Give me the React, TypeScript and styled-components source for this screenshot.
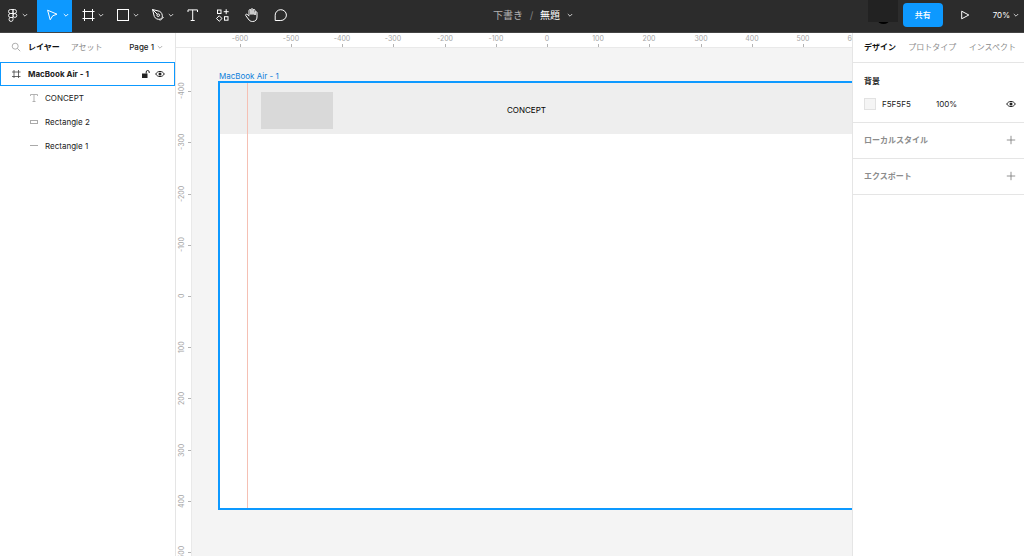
import React from "react";
import styled, { createGlobalStyle, css } from "styled-components";

const BLUE = "#0d99ff";
const SCALE = 0.512;
const RULER = 15;

const GlobalStyle = createGlobalStyle`
  *, *::before, *::after { box-sizing: border-box; }
  body {
    margin: 0;
    font: 400 8px/12px Inter, "Noto Sans CJK JP", sans-serif;
    color: #222;
    background: #fff;
  }
  h1, h2, ul, p { margin: 0; padding: 0; font: inherit; list-style: none; }
  button, input {
    margin: 0;
    padding: 0;
    border: 0;
    background: none;
    font: inherit;
    color: inherit;
  }
  svg { display: block; flex: none; }
`;

const Shell = styled.div`
  display: flex;
  flex-direction: column;
  height: 100vh;
  overflow: hidden;
`;

/* ---------- toolbar ---------- */

const Toolbar = styled.header`
  flex: none;
  display: grid;
  grid-template-columns: 1fr auto 1fr;
  height: 33px;
  background: #2c2c2c;
  border-bottom: 1px solid #444;
  color: #fff;
`;

const Tools = styled.nav`
  display: flex;
`;

const MenuTool = styled.button<{ $active?: boolean; $main?: boolean }>`
  display: flex;
  align-items: center;
  gap: 2px;
  width: ${(p) => (p.$main ? 37 : 35)}px;
  height: 32px;
  padding: 0 0 2px ${(p) => (p.$main ? 4 : 8)}px;
  ${(p) =>
    p.$active &&
    css`
      background: ${BLUE};
    `}
`;

const SingleTools = styled.div`
  display: flex;
  padding-left: 1px;
`;

const Tool = styled.button`
  display: flex;
  align-items: center;
  justify-content: center;
  width: 29px;
  height: 32px;
  padding-bottom: 2px;
`;

const FileTitle = styled.div`
  display: flex;
  align-items: center;
  padding: 0 0 2px 42px;
  font-size: 10px;
  line-height: 16px;
`;

const Folder = styled.a`
  color: #b3b3b3;
  text-decoration: none;
`;

const Slash = styled.span`
  width: 17px;
  text-align: center;
  color: #808080;
`;

const FileName = styled.button`
  display: flex;
  align-items: center;
  gap: 7px;
`;

const Actions = styled.div`
  display: flex;
  justify-content: flex-end;
  align-items: flex-start;
`;

const Avatar = styled.div`
  width: 30px;
  height: 24px;
  margin-right: 5px;
`;

const Share = styled.button`
  width: 40px;
  height: 24px;
  margin-top: 3px;
  border-radius: 4px;
  background: ${BLUE};
  font-weight: 500;
`;

const Play = styled(Tool)`
  width: 44px;
`;

const Zoom = styled.button`
  display: flex;
  align-items: center;
  gap: 3px;
  height: 32px;
  padding: 0 5px 2px 6px;
`;

/* ---------- panels ---------- */

const Body = styled.div`
  flex: 1;
  display: flex;
  min-height: 0;
`;

const LeftPanel = styled.aside`
  flex: none;
  width: 176px;
  border-right: 1px solid #e5e5e5;
`;

const RightPanel = styled.aside`
  flex: none;
  width: 172px;
  border-left: 1px solid #e5e5e5;
  background: #fff;
`;

const LayerTabs = styled.div`
  display: flex;
  align-items: center;
  height: 29px;
  padding: 0 12px 2px 11px;
`;

const Tab = styled.button<{ $active?: boolean }>`
  font-weight: ${(p) => (p.$active ? 700 : 400)};
  color: ${(p) => (p.$active ? "#111" : "#8c8c8c")};
  white-space: nowrap;
`;

const SearchButton = styled.button`
  margin-right: 7px;
`;

const AssetsTab = styled(Tab)`
  margin-left: 11px;
`;

const PageMenu = styled.button`
  display: flex;
  align-items: center;
  gap: 3px;
  margin-left: auto;
  font-weight: 500;
`;

const FrameRow = styled.div`
  display: flex;
  align-items: center;
  height: 24px;
  padding: 0 9px 0 10px;
  border: 1px solid ${BLUE};
  font-weight: 700;
`;

const FrameName = styled.span`
  flex: 1;
  padding-left: 7px;
`;

const RowButton = styled.button`
  margin-left: 4px;
`;

const Layers = styled.ul`
  display: flex;
  flex-direction: column;
  padding-top: 1px;
`;

const Layer = styled.li`
  display: flex;
  align-items: center;
  gap: 5px;
  height: 23px;
  margin-bottom: 1px;
  padding: 0 0 2px 28px;
`;

const DesignTabs = styled.div`
  display: flex;
  align-items: center;
  justify-content: space-between;
  height: 30px;
  padding: 0 8px 2px 11px;
  border-bottom: 1px solid #e5e5e5;
`;

const Background = styled.section`
  height: 60px;
  padding: 12px 8px 0 11px;
  border-bottom: 1px solid #e5e5e5;
`;

const SectionTitle = styled.h2<{ $muted?: boolean }>`
  font-weight: 700;
  color: ${(p) => (p.$muted ? "#8c8c8c" : "#222")};
`;

const Fill = styled.div`
  display: flex;
  align-items: center;
  margin-top: 11px;
`;

const Swatch = styled.button`
  width: 12px;
  height: 12px;
  margin-right: 6px;
  border: 1px solid #e2e2e2;
  background: #f5f5f5;
`;

const Field = styled.input`
  width: 54px;
  height: 12px;
  outline: none;
`;

const FillVisibility = styled.button`
  margin-left: auto;
`;

const Collapsed = styled.section`
  display: flex;
  align-items: center;
  justify-content: space-between;
  height: 36px;
  padding: 0 8px 1px 11px;
  border-bottom: 1px solid #e5e5e5;
`;

/* ---------- canvas ---------- */

const Viewport = styled.main`
  flex: 1;
  min-width: 0;
  display: grid;
  grid-template: ${RULER}px 1fr / 16px 1fr;
  overflow: hidden;
`;

const Corner = styled.div`
  border-bottom: 1px solid #e9e9e9;
`;

const TopRuler = styled.div`
  position: relative;
  overflow: hidden;
  border-bottom: 1px solid #e9e9e9;
  font-size: 7px;
  line-height: 12px;
  color: #a6a6a6;
`;

const TopMark = styled.span`
  position: absolute;
  top: 0;
  width: 30px;
  height: 100%;
  margin-left: -15px;
  text-align: center;
  &::after {
    content: "";
    position: absolute;
    left: 15px;
    bottom: 0;
    width: 1px;
    height: 3px;
    background: #b3b3b3;
  }
`;

const SideRuler = styled.div`
  position: relative;
  overflow: hidden;
  border-right: 1px solid #e9e9e9;
  font-size: 7px;
  line-height: 10px;
  color: #a6a6a6;
`;

const SideMark = styled.span`
  position: absolute;
  left: 0;
  width: 100%;
  height: 30px;
  margin-top: -15px;
  display: flex;
  justify-content: center;
  padding-right: 3px;
  &::after {
    content: "";
    position: absolute;
    right: 0;
    top: 15px;
    width: 3px;
    height: 1px;
    background: #b3b3b3;
  }
`;

const SideText = styled.span`
  writing-mode: vertical-rl;
  transform: rotate(180deg);
  text-align: center;
`;

const Canvas = styled.div`
  position: relative;
  overflow: hidden;
  background: #f4f4f4;
`;

const Artboard = styled.div`
  position: absolute;
  left: 26px;
  top: 33px;
  width: 658px;
  height: 429px;
  border: 2px solid ${BLUE};
  background: #fff;
`;

const ArtboardName = styled.span`
  position: absolute;
  left: 27px;
  top: 22px;
  color: #0d7fdb;
`;

const Bar = styled.div`
  position: absolute;
  left: 0;
  top: 0;
  width: 100%;
  height: 51px;
  background: #eee;
`;

const Logo = styled.div`
  position: absolute;
  left: 41px;
  top: 9px;
  width: 72px;
  height: 37px;
  background: #d9d9d9;
`;

const Heading = styled.h1`
  position: absolute;
  left: 287px;
  top: 21px;
  color: #000;
`;

const Guide = styled.div`
  position: absolute;
  left: 27px;
  top: 0;
  width: 1px;
  height: 100%;
  background: #f5c0b4;
`;

/* ---------- icons ---------- */

const Icon = ({
  size = 16,
  color = "#fff",
  children,
}: {
  size?: number;
  color?: string;
  children: React.ReactNode;
}) => (
  <svg
    width={size}
    height={size}
    viewBox={`0 0 ${size} ${size}`}
    fill="none"
    stroke={color}
    strokeWidth="1"
    aria-hidden="true"
  >
    {children}
  </svg>
);

const Chevron = ({ color = "#ddd" }: { color?: string }) => (
  <Icon size={6} color={color}>
    <path d="M.8 2 3 4.2 5.2 2" strokeWidth=".9" />
  </Icon>
);

const Eye = () => (
  <Icon size={10} color="#222">
    <path d="M.7 5C2.6 1.6 7.4 1.6 9.3 5 7.4 8.4 2.6 8.4.7 5Z" />
    <circle cx="5" cy="5" r="1.5" fill="#222" stroke="none" />
  </Icon>
);

const Plus = () => (
  <Icon size={10} color="#777">
    <path d="M5 .8v8.4M.8 5h8.4" strokeWidth=".8" />
  </Icon>
);

const topMarks = [-600, -500, -400, -300, -200, -100, 0, 100, 200, 300, 400, 500, 600];
const sideMarks = [-400, -300, -200, -100, 0, 100, 200, 300, 400, 500];

export default function App() {
  return (
    <Shell>
      <GlobalStyle />
      <Toolbar>
        <Tools aria-label="ツール">
          <MenuTool $main aria-label="メインメニュー">
            <Icon>
              <path
                d="M9 2.500H6.500a2 2 0 0 0 0 4H9zM9 2.500h1.500a2 2 0 0 1 0 4H9zM9 6.500H6.500a2 2 0 0 0 0 4H9zM9 10.500H6.500a2 2 0 1 0 2.500 2z"
                strokeWidth=".9"
              />
              <circle cx="10.900" cy="8.500" r="1.900" strokeWidth=".9" />
            </Icon>
            <Chevron />
          </MenuTool>
          <MenuTool $active aria-label="移動">
            <Icon>
              <path d="M2.600 3.200 12 7.200 7.700 8.800 5.200 12.800Z" strokeLinejoin="round" />
            </Icon>
            <Chevron color="#fff" />
          </MenuTool>
          <MenuTool aria-label="フレーム">
            <Icon>
              <path d="M4.500 2v12M12.500 2v12M2.500 4.500h12M2.500 11.500h12" />
            </Icon>
            <Chevron />
          </MenuTool>
          <MenuTool aria-label="長方形">
            <Icon>
              <rect x="2.500" y="2.500" width="11" height="11" />
            </Icon>
            <Chevron />
          </MenuTool>
          <MenuTool aria-label="ペン">
            <Icon>
              <path
                d="M2.500 2.500 9.500 4.300C11.600 5.200 12.600 7.600 12.300 10.300L10.300 12.300C7.600 12.600 5.200 11.600 4.300 9.500ZM2.500 2.500 7.300 7.300M10 13.600 13.600 10"
                strokeLinejoin="round"
              />
              <circle cx="8.200" cy="8.200" r="1.300" />
            </Icon>
            <Chevron />
          </MenuTool>
          <SingleTools>
            <Tool aria-label="テキスト">
              <Icon>
                <path d="M3 5V2.900h9.500V5M7.700 2.900v10.700M5.700 13.500h4" />
              </Icon>
            </Tool>
            <Tool aria-label="リソース">
              <Icon>
                <rect x="3.500" y="3" width="3.500" height="3.500" />
                <rect x="10.500" y="9.700" width="3.500" height="3.500" />
                <path d="M12.200 2.200v5M9.700 4.700h5M5.200 8.700 8 11.500 5.200 14.300 2.500 11.500Z" />
              </Icon>
            </Tool>
            <Tool aria-label="手のひら">
              <Icon>
                <path
                  d="M6 8.500V3.600a1 1 0 0 1 2 0V7.500M8 7.500V2.700a1 1 0 0 1 2 0V7.500M10 7.500V3.500a1 1 0 0 1 2 0V8M12 8V5.700a1 1 0 0 1 2 0V10C14 12.800 12.300 14.500 9.700 14.500 7.500 14.500 6.400 13.700 5.300 12L2.700 8.500C2.200 7.300 3.700 6.700 4.500 7.500L6 9.200"
                  strokeLinejoin="round"
                />
              </Icon>
            </Tool>
            <Tool aria-label="コメント">
              <Icon>
                <path
                  d="M3.200 13.500V8.200A5.600 5.400 0 1 1 8.800 13.500Z"
                  strokeLinejoin="round"
                />
              </Icon>
            </Tool>
          </SingleTools>
        </Tools>

        <FileTitle>
          <Folder href="#drafts">下書き</Folder>
          <Slash>/</Slash>
          <FileName>
            無題
            <Chevron />
          </FileName>
        </FileTitle>

        <Actions>
          <Avatar>
            <svg width="30" height="24" viewBox="0 0 30 24" aria-hidden="true">
              <ellipse cx="15.500" cy="20" rx="6" ry="4" fill="#000" />
              <rect width="30" height="22" fill="#222" />
            </svg>
          </Avatar>
          <Share>共有</Share>
          <Play aria-label="プレゼンテーション">
            <Icon>
              <path d="M4.700 4.200 11.800 8 4.700 11.800Z" strokeLinejoin="round" />
            </Icon>
          </Play>
          <Zoom>
            70%
            <Chevron />
          </Zoom>
        </Actions>
      </Toolbar>

      <Body>
        <LeftPanel>
          <LayerTabs>
            <SearchButton aria-label="検索">
              <Icon size={10} color="#a6a6a6">
                <circle cx="4.200" cy="4.200" r="3" strokeWidth=".9" />
                <path d="M6.400 6.400 9.200 9.200" strokeWidth=".9" />
              </Icon>
            </SearchButton>
            <Tab $active>レイヤー</Tab>
            <AssetsTab>アセット</AssetsTab>
            <PageMenu>
              Page 1
              <Chevron color="#aaa" />
            </PageMenu>
          </LayerTabs>
          <FrameRow>
            <Icon size={10} color="#444">
              <path d="M3 1v8M7.500 1v8M1 3h8.500M1 7.500h8.500" strokeWidth=".8" />
            </Icon>
            <FrameName>MacBook Air - 1</FrameName>
            <RowButton aria-label="ロック">
              <Icon size={10} color="#222">
                <rect x="1" y="4.500" width="5.500" height="4.500" fill="#222" stroke="none" />
                <path d="M5.200 4.500V3a1.500 1.500 0 0 1 3 0v1" />
              </Icon>
            </RowButton>
            <RowButton aria-label="表示">
              <Eye />
            </RowButton>
          </FrameRow>
          <Layers>
            <Layer>
              <Icon size={12} color="#aaa">
                <path d="M2.500 4V2.500h7V4M6 2.500v7.300M4.500 9.500h3" strokeWidth=".9" />
              </Icon>
              CONCEPT
            </Layer>
            <Layer>
              <Icon size={12} color="#aaa">
                <rect x="2.500" y="4.500" width="7" height="3" />
              </Icon>
              Rectangle 2
            </Layer>
            <Layer>
              <Icon size={12} color="#aaa">
                <path d="M2 5.500h8" />
              </Icon>
              Rectangle 1
            </Layer>
          </Layers>
        </LeftPanel>

        <Viewport>
          <Corner />
          <TopRuler>
            {topMarks.map((v) => (
              <TopMark key={v} style={{ left: Math.round(355 + v * SCALE) }}>
                {v}
              </TopMark>
            ))}
          </TopRuler>
          <SideRuler>
            {sideMarks.map((v) => (
              <SideMark key={v} style={{ top: Math.round(248 + v * SCALE) }}>
                <SideText>{v}</SideText>
              </SideMark>
            ))}
          </SideRuler>
          <Canvas>
            <ArtboardName>MacBook Air - 1</ArtboardName>
            <Artboard>
              <Bar>
                <Logo />
                <Heading>CONCEPT</Heading>
              </Bar>
              <Guide />
            </Artboard>
          </Canvas>
        </Viewport>

        <RightPanel>
          <DesignTabs>
            <Tab $active>デザイン</Tab>
            <Tab>プロトタイプ</Tab>
            <Tab>インスペクト</Tab>
          </DesignTabs>
          <Background>
            <SectionTitle>背景</SectionTitle>
            <Fill>
              <Swatch aria-label="背景色" />
              <Field aria-label="カラー" defaultValue="F5F5F5" />
              <Field aria-label="不透明度" defaultValue="100%" />
              <FillVisibility aria-label="表示">
                <Eye />
              </FillVisibility>
            </Fill>
          </Background>
          <Collapsed>
            <SectionTitle $muted>ローカルスタイル</SectionTitle>
            <button aria-label="スタイルを追加">
              <Plus />
            </button>
          </Collapsed>
          <Collapsed>
            <SectionTitle $muted>エクスポート</SectionTitle>
            <button aria-label="エクスポートを追加">
              <Plus />
            </button>
          </Collapsed>
        </RightPanel>
      </Body>
    </Shell>
  );
}
